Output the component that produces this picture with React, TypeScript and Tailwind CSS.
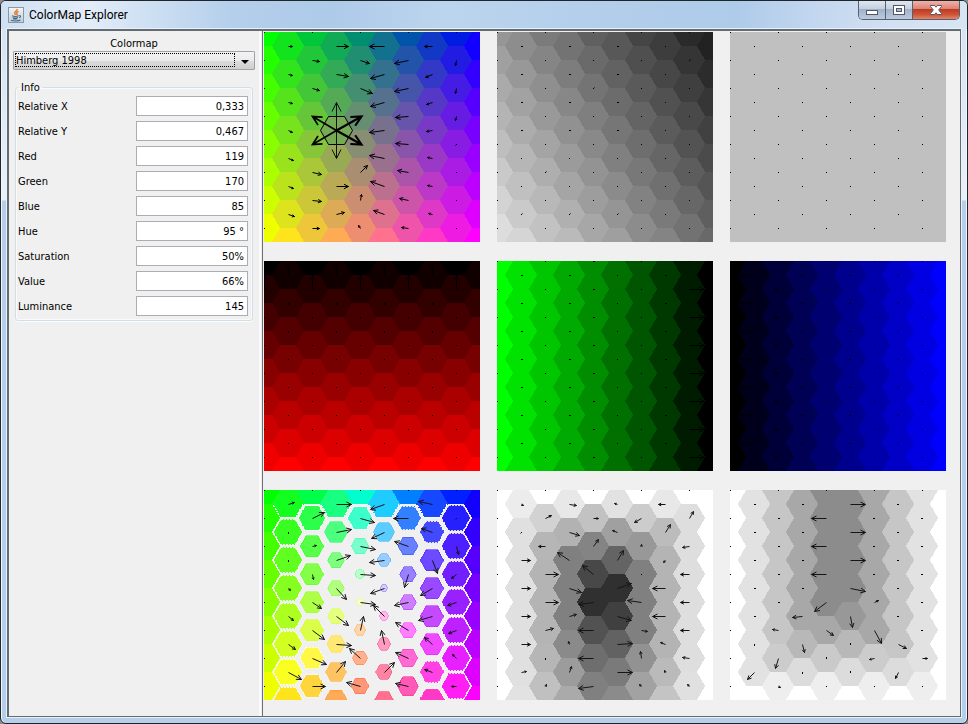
import { ReactNode } from "react";

type Vec = [number, number];
type Shade = (i: number, j: number) => string;

const W = 216;
const H = 210;
const COLS = [0, 1, 2, 3, 4, 5, 6, 7, 8, 9];
const ROWS = [0, 1, 2, 3, 4, 5, 6, 7];

const cx = (i: number) => i * 24;
const cy = (i: number, j: number) => j * 28 + (i % 2) * 14;

function rgb(i: number, j: number): [number, number, number] {
  const x = cx(i) / W;
  const y = cy(i, j) / H;
  return [255 * y, 255 * (1 - x), 255 * x];
}

const css = (r: number, g: number, b: number) =>
  `rgb(${Math.round(r)},${Math.round(g)},${Math.round(b)})`;

function hexPoints(x: number, y: number, rx: number, ry: number) {
  return [
    [x - rx, y],
    [x - rx / 2, y - ry],
    [x + rx / 2, y - ry],
    [x + rx, y],
    [x + rx / 2, y + ry],
    [x - rx / 2, y + ry],
  ]
    .map((p) => p.join(","))
    .join(" ");
}

function Arrow({ x, y, dx, dy, width = 1, color = "#000", head }: {
  x: number; y: number; dx: number; dy: number; width?: number; color?: string; head?: number;
}) {
  const len = Math.hypot(dx, dy);
  if (len < 1) return <rect x={x} y={y} width={1} height={1} fill="#000" />;
  if (len < 1.5 && (dx === 0 || dy === 0)) {
    return (
      <rect x={x + Math.min(dx, 0)} y={y + Math.min(dy, 0)} width={1 + Math.abs(dx)} height={1 + Math.abs(dy)} fill="#000" />
    );
  }
  const sx = x + 0.5;
  const sy = y + 0.5;
  if (len < 1.5) {
    return <path d={`M${sx - dx / 2} ${sy - dy / 2}L${sx + dx} ${sy + dy}`} stroke={color} strokeWidth={width} />;
  }
  const ux = dx / len;
  const uy = dy / len;
  const hl = head ?? Math.min(5, Math.max(2, len * 0.38));
  const hw = hl * 0.5;
  const tx = sx + dx;
  const ty = sy + dy;
  const bx = tx - ux * hl;
  const by = ty - uy * hl;
  return (
    <path
      d={`M${sx} ${sy}L${tx} ${ty}M${bx - uy * hw} ${by + ux * hw}L${tx} ${ty}L${bx + uy * hw} ${by - ux * hw}`}
      fill="none"
      stroke={color}
      strokeWidth={width}
    />
  );
}

function Arrows({ data, color }: { data: (i: number, j: number) => Vec | null; color?: string }) {
  return (
    <g>
      {COLS.slice(0, 9).flatMap((i) =>
        ROWS.map((j) => {
          const v = data(i, j);
          const y = cy(i, j);
          if (!v || y >= H) return null;
          return <Arrow key={`${i}-${j}`} x={cx(i)} y={y} dx={v[0]} dy={v[1]} color={color} />;
        }),
      )}
    </g>
  );
}

function HexGrid({ shade }: { shade: Shade }) {
  return (
    <g shapeRendering="crispEdges">
      {COLS.flatMap((i) =>
        ROWS.map((j) => (
          <polygon key={`${i}-${j}`} points={hexPoints(cx(i), cy(i, j), 16, 14)} fill={shade(i, j)} />
        )),
      )}
    </g>
  );
}

function Plot({ label, children }: { label: string; children: ReactNode }) {
  return (
    <svg role="img" aria-label={label} viewBox={`0 0 ${W} ${H}`} className="block h-[210px] w-[216px] overflow-hidden">
      {children}
    </svg>
  );
}

const fromTable = (table: (Vec | null)[][]) => (i: number, j: number): Vec | null =>
  table[i] && table[i][j] !== undefined ? table[i][j] : [0, 0];

const O: Vec = [0, 0];

const MAIN_ARROWS: (Vec | null)[][] = [
  [],
  [[4, 0], [4, 1], [4, 1], [4, 2], [5, 2], [5, 2], [6, 2]],
  [O, [7, 1], [7, 2], null, null, [9, 2], [9, 1], [7, 0]],
  [[12, 0], [12, 2], null, null, null, [12, 0], [8, -2]],
  [O, [9, 3], [12, 5], null, null, [7, -7], [1, -6], [-2, -3]],
  [[-15, 0], [-14, 4], [-14, 4], [-15, 2], [-15, -3], [-14, -5], [-11, -4]],
  [O, [-14, 3], [-14, 3], [-13, 1], [-13, -1], [-11, -2], [-9, -2], [-7, -1]],
  [[-8, 0], [-7, 3], [-6, 2], [-6, 1], [-5, -1], [-5, -1], [-4, -1]],
  [O, [-1, 5], [-1, 5], [-1, 4], [-1, 1], O, O, O],
];

const HUE_ARROWS: (Vec | null)[][] = [
  [],
  [[6, -2], [0, 1], [0, 1], [2, 2], [5, 4], [7, 5], [13, 7]],
  [O, [12, -6], [4, -1], [1, 5], [9, 6], [12, 9], [14, 6], [13, 0]],
  [[15, 0], [15, -3], [14, -5], [10, 11], [12, 9], [15, 1], [9, -11]],
  [O, [14, 4], [15, 3], [15, 1], [15, 2], [3, -14], [-11, -10], [-14, -4]],
  [[-14, 5], [-13, 6], [-15, 2], [-14, 5], [-11, -11], [-3, -14], [10, -10]],
  [O, [-15, 0], [-14, -5], [-4, 13], [-14, 3], [-13, -8], [-13, -6], [-13, -3]],
  [[-14, -3], [-11, -4], [5, 13], [-12, 7], [-14, 4], [-8, -7], [-8, -3]],
  [O, [-1, 1], [2, 8], [-5, 4], [-9, 3], [-8, 3], [-4, -4], [-5, 0]],
];

const SAT_ARROWS: (Vec | null)[][] = [
  [],
  [[2, 1], [-1, 1], [9, 0], [9, 0], [9, 0], [9, 0], [5, -1]],
  [O, [6, -3], [-7, 0], [13, 0], [13, 0], [8, -2], [0, 1], [1, -2]],
  [[7, 1], [10, 3], [-12, -8], [12, 4], [7, -2], [-1, -3], [2, -6]],
  [O, [5, 0], [5, -7], [-11, -9], [-15, 2], [-15, 0], [-15, 0], [-15, 2]],
  [[-3, -1], [-5, -2], [6, -10], [14, -5], [14, 4], [15, -1], [15, 0]],
  [O, [-7, 4], [0, -2], O, [-14, -2], [6, 1], [-1, -7], [-2, -2]],
  [[-7, 0], [5, -8], [-2, 2], [-13, 0], [-13, 0], [-5, -2], [-1, -2]],
  [O, [4, -7], [-7, 1], [-9, 0], [-9, 0], [-9, 0], [-7, -1], [-2, -2]],
];

const D1: Vec = [1, 0];
const L1: Vec = [-1, 0];
const VAL_ARROWS: (Vec | null)[][] = [
  [],
  [[2, 0], [2, 0], [2, 0], [2, 0], [2, 0], [0, 1], [-7, 7]],
  [O, D1, D1, D1, D1, [-6, -1], [-3, 10], [2, 1]],
  [D1, D1, D1, D1, [-10, 1], [2, 8], [0, 1]],
  [O, [-15, 0], [-15, 0], [-15, 0], [-12, 9], [7, 5], [0, -1], O],
  [[15, 0], [15, 0], [15, 0], [15, 3], [2, 11], [0, -1], [0, -1]],
  [O, L1, L1, L1, [4, -2], [7, 13], [-5, 1], O],
  [L1, L1, L1, L1, L1, [8, 4], [-3, 6]],
  [O, [-2, 0], [-2, 0], [-2, 0], [-2, 0], [-2, 0], [5, 0], O],
].map((col) =>
  (col as Vec[]).map(([dx, dy]): Vec => (Math.abs(dx) === 2 && dy === 0 ? [dx / 2, 0] : [dx, dy])),
);

const SAT_GREY = [
  ["fff", "fff", "fff", "fff", "fff", "fff", "fff", "fff"],
  ["ececec", "e0e0e0", "e0e0e0", "e0e0e0", "e0e0e0", "e0e0e0", "e0e0e0", "e2e2e2"],
  ["fff", "d2d2d2", "b6b6b6", "b4b4b4", "b4b4b4", "b4b4b4", "b6b6b6", "c0c0c0"],
  ["e8e8e8", "b2b2b2", "808080", "808080", "808080", "8a8a8a", "9c9c9c", "aaaaaa"],
  ["fff", "c2c2c2", "848484", "484848", "303030", "525252", "6e6e6e", "808080"],
  ["e2e2e2", "a0a0a0", "646464", "303030", "404040", "626262", "7a7a7a", "8b8b8b"],
  ["fff", "cccccc", "989898", "808080", "808080", "808080", "929292", "a2a2a2"],
  ["e8e8e8", "bcbcbc", "b4b4b4", "b4b4b4", "b4b4b4", "b4b4b4", "bababa", "c4c4c4"],
  ["fff", "dedede", "dedede", "dedede", "dedede", "dedede", "dedede", "e0e0e0"],
  ["fff", "fff", "fff", "fff", "fff", "fff", "fff", "fff"],
];

const VAL_GREY = [
  ["fff", "fff", "fff", "fff", "fff", "fff", "fff", "fff"],
  ["e2e2e2", "e2e2e2", "e2e2e2", "e2e2e2", "e2e2e2", "e2e2e2", "e2e2e2", "fff"],
  ["c6c6c6", "c6c6c6", "c6c6c6", "c6c6c6", "c6c6c6", "c6c6c6", "cccccc", "eeeeee"],
  ["a8a8a8", "a8a8a8", "a8a8a8", "a8a8a8", "a8a8a8", "b8b8b8", "dcdcdc", "fff"],
  ["8c8c8c", "8c8c8c", "8c8c8c", "8c8c8c", "8c8c8c", "a8a8a8", "cacaca", "eeeeee"],
  ["8c8c8c", "8c8c8c", "8c8c8c", "8c8c8c", "989898", "b8b8b8", "dcdcdc", "fff"],
  ["a8a8a8", "a8a8a8", "a8a8a8", "a8a8a8", "a8a8a8", "a8a8a8", "cccccc", "eeeeee"],
  ["c6c6c6", "c6c6c6", "c6c6c6", "c6c6c6", "c6c6c6", "c6c6c6", "dcdcdc", "fff"],
  ["e2e2e2", "e2e2e2", "e2e2e2", "e2e2e2", "e2e2e2", "e2e2e2", "e2e2e2", "eeeeee"],
  ["fff", "fff", "fff", "fff", "fff", "fff", "fff", "fff"],
];

const luminance: Shade = (i, j) => {
  const [r, g, b] = rgb(i, j);
  const l = 0.299 * r + 0.587 * g + 0.114 * b;
  return css(l, l, l);
};

const LUM_TICKS = ["8-1", "4-2", "2-5", "1-6", "3-6", "5-6"];

function Selection() {
  const x = 72;
  const y = 98;
  return (
    <g>
      <polygon points={hexPoints(x + 0.5, y + 0.5, 16, 14)} fill="none" stroke="#000" strokeWidth={1} />
      <Arrow x={x} y={y} dx={0} dy={-28} head={9} color="#111" />
      <Arrow x={x} y={y} dx={0} dy={28} head={9} color="#111" />
      <Arrow x={x} y={y} dx={-24} dy={-14} head={9} width={1.7} />
      <Arrow x={x} y={y} dx={-24} dy={14} head={9} width={1.7} />
      <Arrow x={x} y={y} dx={25} dy={-14} head={10} width={2.2} />
      <Arrow x={x} y={y} dx={25} dy={14} head={10} width={2.2} />
    </g>
  );
}

/** Each cell shows its hue at full value; its size follows the saturation. */
function HueHexes() {
  return (
    <g shapeRendering="crispEdges">
      {COLS.flatMap((i) =>
        ROWS.map((j) => {
          const [r, g, b] = rgb(i, j);
          const max = Math.max(r, g, b);
          const min = Math.min(r, g, b);
          const s = (max - min) / max;
          const fill = css((r / max) * 255, (g / max) * 255, (b / max) * 255);
          const mix = (v: number) => (((v - min) / (max - min)) * 0.5 + (v / max) * 0.5) * 255;
          const x = cx(i);
          const y = cy(i, j);
          if (s > 0.999) {
            return <polygon key={`${i}-${j}`} points={hexPoints(x, y, 16, 14)} fill={fill} />;
          }
          const rx = 16 * s + 0.5;
          const ry = 14 * s + 0.5;
          if (y === 14) {
            return (
              <g key={`${i}-${j}`}>
                <polygon points={`${x - 16},14 ${x - 8},0 ${x + 8},0 ${x + 16},14 ${x + 8},27 ${x - 8},27`} fill={fill} />
                <polyline points={`${x + 15},14 ${x + 8},27 ${x - 8},27 ${x - 15},14`} fill="none" stroke="#fff" strokeWidth={1} strokeDasharray="2 1" />
              </g>
            );
          }
          if (s > 0.72) {
            return (
              <g key={`${i}-${j}`}>
                <polygon points={hexPoints(x, y, rx, ry)} fill={fill} />
                <polygon points={hexPoints(x, y, rx, ry)} fill="none" stroke="#fff" strokeWidth={0.8} strokeDasharray="2 1" />
              </g>
            );
          }
          return (
            <polygon key={`${i}-${j}`} points={hexPoints(x, y, rx, ry)} fill={fill} stroke={css(mix(r), mix(g), mix(b))} strokeWidth={0.6} />
          );
        }),
      )}
    </g>
  );
}

const FIELDS: [string, string, string][] = [
  ["rel-x", "Relative X", "0,333"],
  ["rel-y", "Relative Y", "0,467"],
  ["red", "Red", "119"],
  ["green", "Green", "170"],
  ["blue", "Blue", "85"],
  ["hue", "Hue", "95 °"],
  ["saturation", "Saturation", "50%"],
  ["value", "Value", "66%"],
  ["luminance", "Luminance", "145"],
];

function JavaIcon() {
  return (
    <svg aria-hidden="true" viewBox="0 0 16 16" className="h-4 w-4">
      <defs>
        <linearGradient id="java-bg" x1="0" y1="0" x2="0" y2="1">
          <stop offset="0" stopColor="#f4f6f8" />
          <stop offset="1" stopColor="#c3ccd4" />
        </linearGradient>
      </defs>
      <rect x="0.5" y="0.5" width="15" height="15" fill="url(#java-bg)" stroke="#8b98a5" />
      <path d="M9.2 2c.6 1.600-3.400 2.600-2.400 4.500.3.500.8.800.9 1.500M10.600 4.400c-1.400.5-2.500 1.200-1.600 2.300.3.400.2.900-.2 1.300" fill="none" stroke="#e8792b" strokeWidth="1.500" />
      <path d="M4 8.800c1.600.7 5 .7 6.600 0M4.600 10.400c1.300.6 4 .6 5.300 0M5.100 11.800c1.200.4 3.200.4 4.300 0M10.800 8.800c2-.6 2.400 1.200.4 2M3 13.300c2.500.9 7.500.9 9.500-.2" fill="none" stroke="#3f6a8c" strokeWidth="1.100" />
    </svg>
  );
}

function TitleBar() {
  return (
    <header className="flex h-[28px] items-start justify-between bg-[linear-gradient(90deg,#cfe0f2_0,#e3edf8_9%,#cfe0f3_15%,#b4cfeb_24%,#adcae9_34%,#bcd5ee_46%,#b2ceeb_62%,#aecbe9_76%,#c2d6ef_84%,#d2e0f2_92%,#d6e4f4_100%)]">
      <div className="flex h-[28px] items-center gap-[5px] pl-[7px]">
        <JavaIcon />
        <h1 className="font-['Roboto','Open_Sans',sans-serif] text-[12px] leading-4 text-black">ColorMap Explorer</h1>
      </div>
      <div className="mr-[7px] flex h-[19px] overflow-hidden rounded-b-[5px] border border-t-0 border-[#56606f]">
        <button type="button" aria-label="Minimize" className="flex w-[27px] items-center justify-center border-r border-[#56606f] bg-[linear-gradient(180deg,#dfe6f0_0,#c3cfdf_45%,#9fb2c9_46%,#bccbdd_100%)]">
          <svg viewBox="0 0 12 12" className="h-3 w-3"><rect x="0.500" y="6.500" width="11" height="4" fill="#fff" stroke="#535666" /></svg>
        </button>
        <button type="button" aria-label="Maximize" className="flex w-[27px] items-center justify-center border-r border-[#56606f] bg-[linear-gradient(180deg,#dfe6f0_0,#c3cfdf_45%,#9fb2c9_46%,#bccbdd_100%)]">
          <svg viewBox="0 0 12 12" className="h-3 w-3">
            <rect x="0.500" y="1.500" width="11" height="9" fill="#fff" stroke="#535666" />
            <rect x="3.500" y="4.500" width="5" height="3" fill="#a8bcd6" stroke="#535666" />
          </svg>
        </button>
        <button type="button" aria-label="Close" className="flex w-[46px] items-center justify-center bg-[linear-gradient(180deg,#efb3a8_0,#dc8170_45%,#bf3a22_46%,#cf5438_75%,#e0866a_100%)]">
          <svg viewBox="0 0 12 12" className="h-3 w-3">
            <path d="M0.500 1.500h4L6 3.200l1.500-1.700h4v1L8.700 6l2.800 3.500v1h-4L6 8.800l-1.500 1.700h-4v-1L3.300 6 0.500 2.500z" fill="#fff" stroke="#535666" strokeWidth="1" />
          </svg>
        </button>
      </div>
    </header>
  );
}

function Sidebar() {
  return (
    <aside className="flex w-[250px] shrink-0 flex-col px-[4px] pt-[6px]">
      <label htmlFor="colormap" className="text-center leading-[13px]">Colormap</label>
      <div className="relative mt-px">
        <select
          id="colormap"
          className="block h-[19px] w-full appearance-none rounded-[1px] border border-[#9fa3a9] bg-[linear-gradient(180deg,#f3f3f3_0,#ebebeb_50%,#dcdcdc_51%,#cfcfcf_100%)] pl-[2px] leading-4"
        >
          <option>Himberg 1998</option>
        </select>
        <span className="pointer-events-none absolute top-[2px] bottom-[3px] left-[2px] right-[20px] border border-dotted border-black" />
        <svg aria-hidden="true" viewBox="0 0 8 4" className="pointer-events-none absolute top-[9px] right-[6px] h-1 w-2">
          <path d="M0 0h8L4 4z" fill="#000" />
        </svg>
      </div>
      <fieldset className="mx-[2px] mt-[11px] rounded-[3px] border border-[#d3dde6] px-[2px] pb-[4px] shadow-[inset_0_0_0_1px_#f8fafb,0_1px_0_#fafbfc]">
        <legend className="px-[3px] leading-[13px]">Info</legend>
        <div className="flex flex-col gap-[5px] pt-[2px]">
          {FIELDS.map(([id, label, value]) => (
            <div key={id} className="flex items-center justify-between pr-[2px]">
              <label htmlFor={id} className="pt-px leading-[15px]">{label}</label>
              <input id={id} readOnly defaultValue={value} className="h-[20px] w-[112px] border border-[#abadb3] bg-white px-[3px] text-right" />
            </div>
          ))}
        </div>
      </fieldset>
    </aside>
  );
}

function Plots() {
  return (
    <section aria-label="Plots" className="grid flex-1 auto-rows-max grid-cols-[repeat(3,max-content)] content-start gap-x-[17px] gap-y-[19px] pt-px pl-px">
      <Plot label="Colormap">
        <HexGrid shade={(i, j) => css(...rgb(i, j))} />
        <Arrows data={fromTable(MAIN_ARROWS)} />
        <Selection />
      </Plot>
      <Plot label="Luminance">
        <HexGrid shade={luminance} />
        <Arrows data={(i, j) => (LUM_TICKS.includes(`${i}-${j}`) ? [1, -1] : i % 4 === 1 || i === 3 ? (j < 4 ? D1 : O) : O)} />
      </Plot>
      <Plot label="Uniform">
        <rect width={W} height={H} fill="#c0c0c0" />
        <Arrows data={() => O} />
      </Plot>
      <Plot label="Red">
        <HexGrid shade={(i, j) => css(rgb(i, j)[0], 0, 0)} />
        <Arrows data={(i, j) => {
          const y = cy(i, j);
          if (y === 14) return [0, -12];
          if (y === 28) return [0, -14];
          return y > 28 && y < 80 ? [0, 1] : O;
        }} />
      </Plot>
      <Plot label="Green">
        <HexGrid shade={(i, j) => css(0, rgb(i, j)[1], 0)} />
        <Arrows data={(i, j) => (i === 8 && j > 0 ? [15, 0] : i === 1 || i === 3 || i === 4 || i === 7 ? D1 : O)} />
      </Plot>
      <Plot label="Blue">
        <HexGrid shade={(i, j) => css(0, 0, rgb(i, j)[2])} />
        <Arrows data={(i, j) => (i === 1 ? [-15, 0] : i === 2 && j > 0 ? [-4, 0] : i === 3 || i === 5 ? L1 : O)} />
      </Plot>
      <Plot label="Hue">
        <HueHexes />
        <Arrows data={fromTable(HUE_ARROWS)} color="#151515" />
      </Plot>
      <Plot label="Saturation">
        <HexGrid shade={(i, j) => `#${SAT_GREY[i][j]}`} />
        <Arrows data={fromTable(SAT_ARROWS)} color="#151515" />
      </Plot>
      <Plot label="Value">
        <HexGrid shade={(i, j) => `#${VAL_GREY[i][j]}`} />
        <Arrows data={fromTable(VAL_ARROWS)} color="#151515" />
      </Plot>
    </section>
  );
}

export default function App() {
  return (
    <div className="flex min-h-screen bg-[#8c8c8c] font-['DejaVu_Sans_Condensed','DejaVu_Sans',sans-serif] text-[11px] text-black">
      <div className="flex flex-1 flex-col overflow-hidden rounded-[6px] border border-[#20242b] bg-[linear-gradient(180deg,#d3e1f2_0,#e9f0f8_199px,#b5cfe8_200px,#b5cfe8_100%)] shadow-[inset_1px_0_0_#f4f8fc,inset_-1px_0_0_#f4f8fc]">
        <TitleBar />
        <main className="mx-[6px] mb-[6px] flex flex-1 border-t-2 border-r border-b border-l-2 border-[#636c72] bg-[#f0f0f0] shadow-[0_0_0_1px_#e9f2fb]">
          <Sidebar />
          <div className="w-[4px] shrink-0 border-r border-l-2 border-r-[#6b6f74] border-l-[#fbfbfb]" />
          <Plots />
        </main>
      </div>
    </div>
  );
}
